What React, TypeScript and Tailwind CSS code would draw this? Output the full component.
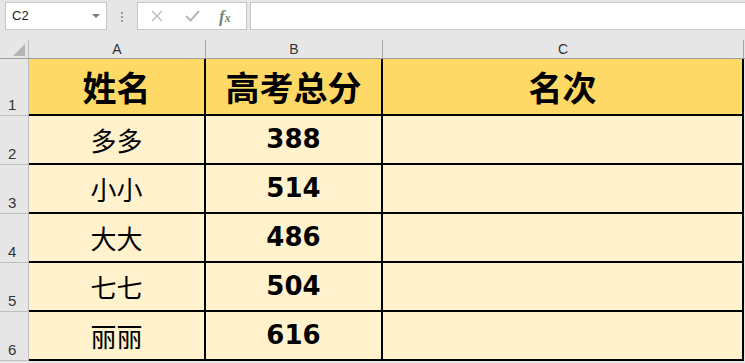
import React from 'react';

const cjk = '"Noto Sans CJK SC", "Noto Sans", sans-serif';
const ui = '"Liberation Sans", Arial, sans-serif';

const rows = [
  { name: '多多', score: '388' },
  { name: '小小', score: '514' },
  { name: '大大', score: '486' },
  { name: '七七', score: '504' },
  { name: '丽丽', score: '616' },
];

function FormulaBar() {
  return (
    <div className="h-[40px] shrink-0 flex items-start pt-[2px]" style={{ fontFamily: ui }}>
      {/* name box */}
      <div className="ml-[5px] w-[102px] h-[28px] bg-white border border-[#c6c6c6] flex items-center justify-between pl-[6px] pr-[6px]">
        <span className="text-[13px] text-[#222]">C2</span>
        <span className="w-0 h-0 border-l-[4px] border-r-[4px] border-t-[4px] border-l-transparent border-r-transparent border-t-[#7a7a7a]" />
      </div>
      {/* grip dots */}
      <div className="ml-[14px] mt-[10px] flex flex-col gap-[2px]">
        <span className="w-[2px] h-[2px] bg-[#9a9a9a]" />
        <span className="w-[2px] h-[2px] bg-[#9a9a9a]" />
        <span className="w-[2px] h-[2px] bg-[#9a9a9a]" />
      </div>
      {/* cancel / enter / function */}
      <div className="ml-[14px] w-[110px] h-[28px] bg-white border border-[#c6c6c6] flex items-center">
        <svg width="12" height="12" viewBox="0 0 12 12" className="ml-[13px]">
          <path d="M1 1 L11 11 M11 1 L1 11" stroke="#b8b8b8" strokeWidth="1.3" fill="none" />
        </svg>
        <svg width="15" height="12" viewBox="0 0 15 12" className="ml-[22px]">
          <path d="M1 6 L5.5 10.5 L14 1" stroke="#b8b8b8" strokeWidth="2" fill="none" />
        </svg>
        <span
          className="ml-[19px] italic font-bold text-[17px] leading-none text-[#6f8a6f]"
          style={{ fontFamily: '"Liberation Serif", serif' }}
        >
          f<span className="text-[12px]">x</span>
        </span>
      </div>
      {/* formula input */}
      <div className="ml-[3px] flex-1 h-[28px] bg-white border border-[#c6c6c6] border-r-0" />
    </div>
  );
}

function ColumnHeaders() {
  const cols = [
    { label: 'A', w: 'w-[177px]' },
    { label: 'B', w: 'w-[177px]' },
    { label: 'C', w: 'w-[361px]' },
  ];
  return (
    <div className="h-[19px] shrink-0 flex border-b border-[#9e9e9e]" style={{ fontFamily: ui }}>
      <div className="w-[29px] h-full border-r border-[#bdbdbd] relative">
        {/* select-all corner triangle */}
        <span
          className="absolute right-[3px] bottom-[2px] w-0 h-0"
          style={{ borderLeft: '12px solid transparent', borderBottom: '12px solid #b4b4b4' }}
        />
      </div>
      {cols.map((c) => (
        <div key={c.label} className={`${c.w} h-full border-r border-[#a8a8a8] flex items-end justify-center text-[14px] leading-[17px] text-[#333]`}>
          {c.label}
        </div>
      ))}
    </div>
  );
}

function RowHeader({ n, h }: { n: number; h: string }) {
  return (
    <div className={`w-[29px] ${h} shrink-0 border-r border-b border-[#bdbdbd] flex items-end pl-[8px] pb-[3px] text-[15px] leading-none text-[#333]`} style={{ fontFamily: ui }}>
      {n}
    </div>
  );
}

export default function App() {
  return (
    <div className="w-[745px] h-[363px] bg-[#e6e6e6] overflow-hidden flex flex-col">
      <FormulaBar />
      <ColumnHeaders />

      {/* header row */}
      <div className="flex shrink-0">
        <RowHeader n={1} h="h-[57px]" />
        <div className="w-[177px] h-[57px] bg-[#ffd966] border-r-2 border-b-2 border-black flex items-center justify-center text-[34px] font-bold text-black" style={{ fontFamily: cjk }}>
          姓名
        </div>
        <div className="w-[177px] h-[57px] bg-[#ffd966] border-r-2 border-b-2 border-black flex items-center justify-center text-[34px] font-bold text-black" style={{ fontFamily: cjk }}>
          高考总分
        </div>
        <div className="w-[361px] h-[57px] bg-[#ffd966] border-r-2 border-b-2 border-black flex items-center justify-center text-[34px] font-bold text-black" style={{ fontFamily: cjk }}>
          名次
        </div>
      </div>

      {rows.map((r, i) => (
        <div key={r.name} className="flex shrink-0">
          <RowHeader n={i + 2} h="h-[49px]" />
          <div className="w-[177px] h-[49px] bg-[#fff2cc] border-r-2 border-b-2 border-black flex items-center justify-center text-[26px] text-black" style={{ fontFamily: cjk }}>
            {r.name}
          </div>
          <div className="w-[177px] h-[49px] bg-[#fff2cc] border-r-2 border-b-2 border-black flex items-center justify-center text-[26px] font-bold text-black" style={{ fontFamily: '"DejaVu Sans", sans-serif' }}>
            {r.score}
          </div>
          <div className="w-[361px] h-[49px] bg-[#fff2cc] border-r-2 border-b-2 border-black" />
        </div>
      ))}
    </div>
  );
}
